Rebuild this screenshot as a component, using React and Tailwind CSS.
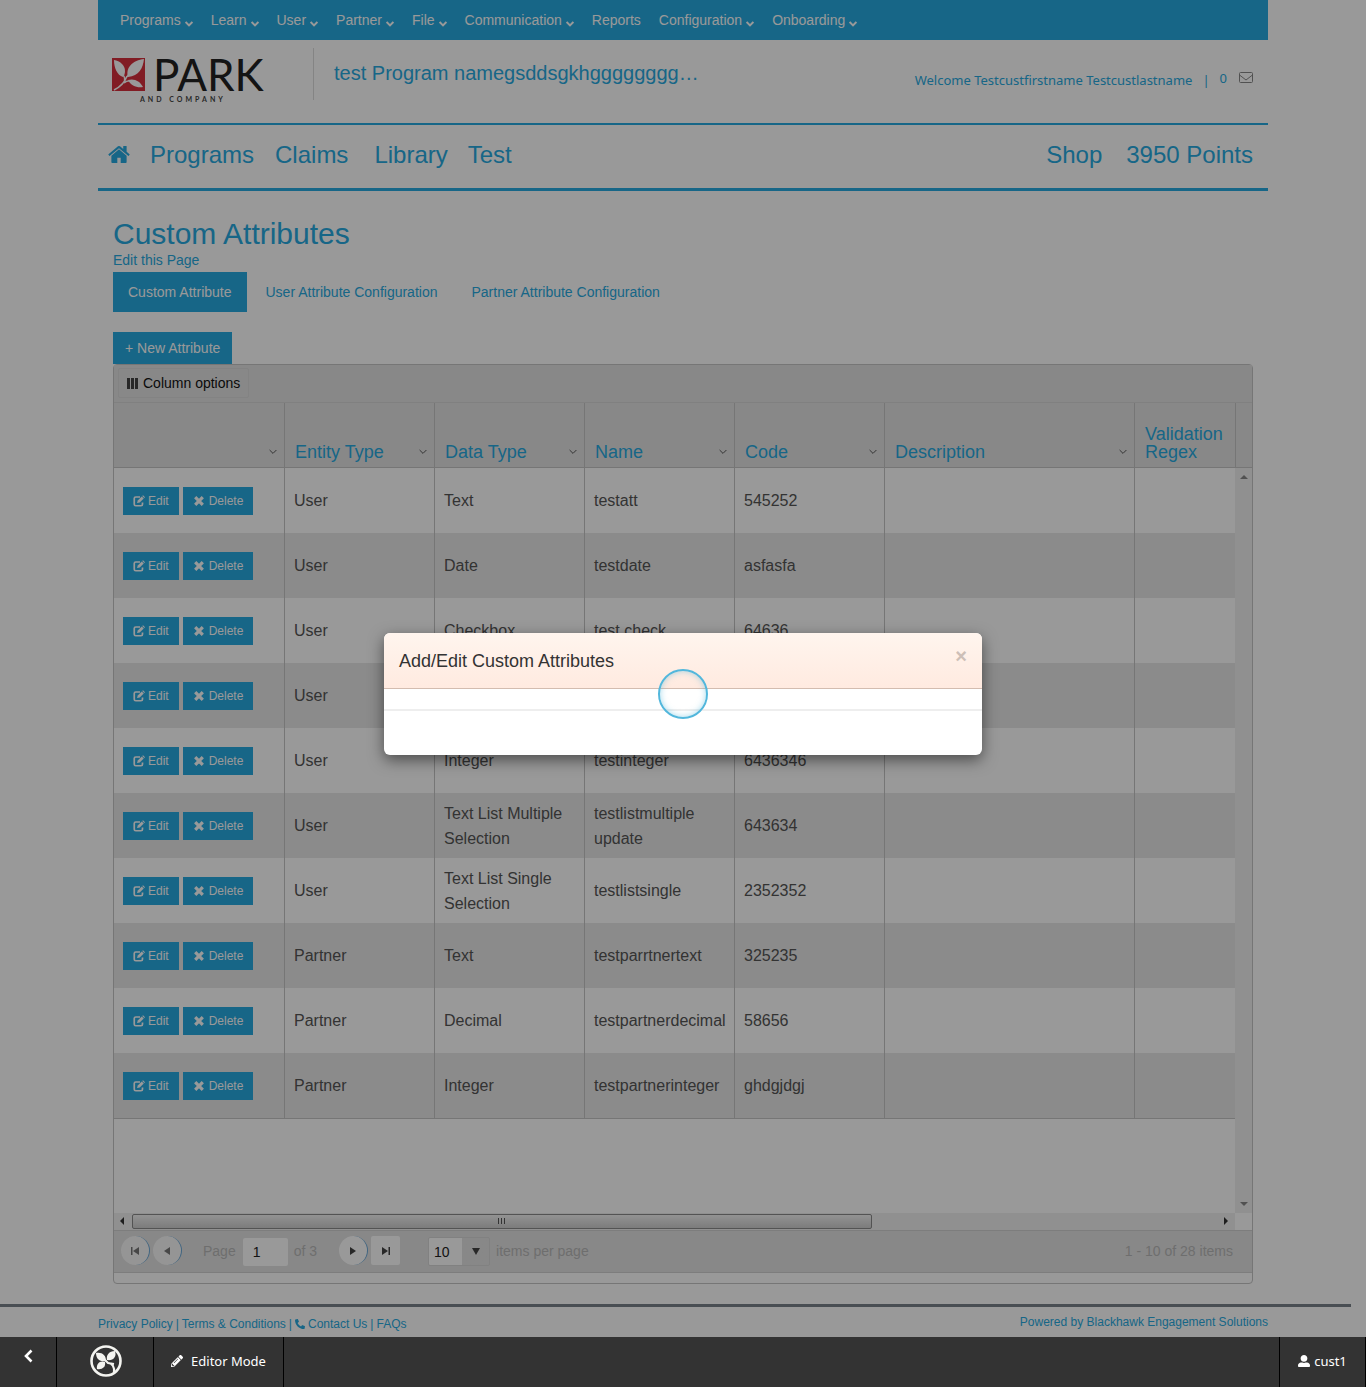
import React from "react";
import { FaPhoneAlt, FaPencilAlt, FaUserAlt } from "react-icons/fa";

const menu = [
  ["Programs", true],
  ["Learn", true],
  ["User", true],
  ["Partner", true],
  ["File", true],
  ["Communication", true],
  ["Reports", false],
  ["Configuration", true],
  ["Onboarding", true],
];

const columns = ["", "Entity Type", "Data Type", "Name", "Code", "Description", "Validation Regex"];

const rows = [
  ["User", "Text", "testatt", "545252"],
  ["User", "Date", "testdate", "asfasfa"],
  ["User", "Checkbox", "test check", "64636"],
  ["User", "", "", ""],
  ["User", "Integer", "testinteger", "6436346"],
  ["User", "Text List Multiple Selection", "testlistmultiple update", "643634"],
  ["User", "Text List Single Selection", "testlistsingle", "2352352"],
  ["Partner", "Text", "testparrtnertext", "325235"],
  ["Partner", "Decimal", "testpartnerdecimal", "58656"],
  ["Partner", "Integer", "testpartnerinteger", "ghdgjdgj"],
];

function Caret({ className }) {
  return (
    <svg viewBox="0 0 8 6" className={className} fill="none" stroke="currentColor" aria-hidden="true">
      <path d="M0.6 1L4 4.4L7.4 1" />
    </svg>
  );
}

function HomeIcon() {
  return (
    <svg viewBox="0 200 1664 1400" className="h-[19px] w-[22px]" fill="currentColor" aria-hidden="true">
      <path d="M1408 992v480q0 26-19 45t-45 19H960v-384H704v384H320q-26 0-45-19t-19-45V992q0-1 .5-3t.5-3l575-474 575 474q1 2 1 6zm223-69l-62 74q-8 9-21 11h-3q-13 0-21-7L832 424 140 1001q-12 8-24 7-13-2-21-11l-62-74q-8-10-7-23.500T37 878L756 279q32-26 76-26t76 26l244 204V288q0-14 9-23t23-9h192q14 0 23 9t9 23v408l219 182q10 8 11 21.500t-7 23.500z" />
    </svg>
  );
}

function EditIcon() {
  return (
    <svg viewBox="0 0 24 24" className="size-3" fill="none" aria-hidden="true">
      <path d="M14 4H5.500Q2.500 4 2.500 7V18.500Q2.500 21.500 5.500 21.500H16Q19 21.500 19 18.500V15" stroke="currentColor" strokeWidth="3.400" />
      <path d="M8 16L9.500 11L17.500 3L21.500 7L13.500 15Z" fill="currentColor" />
      <path d="M18.500 2L20 .5L24 4.500L22.500 6Z" fill="currentColor" />
    </svg>
  );
}

function RemoveIcon() {
  return (
    <svg viewBox="0 0 12 12" className="size-3" stroke="currentColor" strokeWidth="3.200" aria-hidden="true">
      <path d="M2.200 2.200L9.800 9.800M9.800 2.200L2.200 9.800" />
    </svg>
  );
}

function EnvelopeIcon() {
  return (
    <svg viewBox="0 0 14 12" className="mt-1 ml-3 h-3 w-3.5 text-[#888]" fill="none" stroke="currentColor" aria-hidden="true">
      <rect x=".5" y=".5" width="13" height="10" rx="1" />
      <path d="M.5 3L7 8L13.500 3" />
    </svg>
  );
}

function ParkLogo() {
  return (
    <a href="#home" aria-label="Park and Company" className="mt-[18px] ml-3.5 block w-[152px]">
      <span className="flex items-center gap-2">
        <svg viewBox="0 0 33 33" className="size-[33px] shrink-0" aria-hidden="true">
          <rect width="33" height="33" fill="#d8303c" />
          <g fill="#fff">
            <path d="M2 2C8 3 13 7 13 13C13 16 12 18 11 19C5 17 2 10 2 2Z" />
            <path d="M32 1C31 10 27 18 16 19C13 10 21 2 32 1Z" />
            <path d="M16 22C22 20 28 23 31 29C25 30 19 28 16 22Z" />
          </g>
          <path d="M2 32C8 29 13 24 15 18M11 17C13 19 13 22 12 25M12 25C14 23 16 22 20 23M15 19C17 15 21 11 26 7" fill="none" stroke="#fff" strokeWidth="1.500" />
        </svg>
        <span className="font-[Lato] text-[44px] leading-[33px] text-[#222]">PARK</span>
      </span>
      <span className="mt-1 block pl-7 font-[Lato] text-[7px] leading-[9px] font-bold tracking-[3px] text-[#444]">AND COMPANY</span>
    </a>
  );
}

function PagerButton({ label, square, disabled, children }) {
  return (
    <button
      type="button"
      aria-label={label}
      disabled={disabled}
      className={
        "flex size-[29px] items-center justify-center " +
        (disabled ? "bg-[#f8f8f8] text-[#777] " : "bg-white text-[#444] ") +
        (square ? "rounded-xs" : "rounded-full border-r border-[#6aa7d6]")
      }
    >
      <svg viewBox="0 0 10 10" className="size-2.5" fill="currentColor" aria-hidden="true">
        {children}
      </svg>
    </button>
  );
}

export default function App() {
  return (
    <div className="relative flex min-h-screen flex-col bg-white font-['Liberation_Sans',Arial,sans-serif] text-sm text-[#27aae1]">
      <header className="mx-auto w-full max-w-[1170px]">
        <nav className="flex h-10 items-center gap-[18px] bg-[#27aae1] px-[22px] text-white" aria-label="Administration">
          {menu.map(([name, more]) => (
            <a key={name} href="#menu" className="flex items-center gap-1 leading-5">
              {name}
              {more && <Caret className="mt-2 h-1.5 w-2 stroke-2" />}
            </a>
          ))}
        </nav>
        <div className="flex h-[83px] items-start">
          <div className="w-[215px] shrink-0">
            <ParkLogo />
          </div>
          <div className="mt-2 h-[52px] border-l border-[#ddd] pl-5">
            <p className="pt-[13px] text-xl leading-6">test Program namegsddsgkhgggggggg…</p>
          </div>
          <div className="mt-7 mr-[15px] ml-auto flex items-start font-['Noto_Sans',sans-serif] text-[13px] leading-5">
            <span className="mt-0.5">Welcome Testcustfirstname Testcustlastname</span>
            <span className="mt-0.5 ml-2.5">|</span>
            <span className="ml-2.5">0</span>
            <EnvelopeIcon />
          </div>
        </div>
        <nav className="flex h-[68px] items-center border-t-2 border-b-3 border-[#27aae1] pr-[15px] pb-1 pl-2.5 text-2xl" aria-label="Main">
          <a href="#home" aria-label="Home"><HomeIcon /></a>
          <a href="#programs" className="ml-5">Programs</a>
          <a href="#claims" className="ml-[21px]">Claims</a>
          <a href="#library" className="ml-[26px]">Library</a>
          <a href="#test" className="ml-5">Test</a>
          <a href="#shop" className="ml-auto">Shop</a>
          <a href="#points" className="ml-6">3950 Points</a>
        </nav>
      </header>

      <main className="mx-auto w-full max-w-[1170px] px-[15px] pt-[26px]">
        <h1 className="text-3xl leading-[33px]">Custom Attributes</h1>
        <a href="#edit" className="block leading-5">Edit this Page</a>
        <nav className="mt-0.5 flex gap-1" aria-label="Attribute sections">
          <a href="#custom" className="bg-[#27aae1] px-[15px] py-2.5 leading-5 text-white">Custom Attribute</a>
          <a href="#user" className="px-[15px] py-2.5 leading-5">User Attribute Configuration</a>
          <a href="#partner" className="px-[15px] py-2.5 leading-5">Partner Attribute Configuration</a>
        </nav>
        <button type="button" className="mt-5 block bg-[#27aae1] px-3 py-1.5 leading-5 text-white">+ New Attribute</button>

        <section className="rounded-sm border border-[#c5c5c5] pb-2.5">
          <div className="flex h-[38px] items-center border-b border-[#d5d5d5] bg-[#e3e3e3] pb-px pl-1">
            <button type="button" className="flex items-center gap-[5px] rounded-xs border border-[#dadada] px-2 py-1 leading-5 text-[#111]">
              <svg viewBox="0 0 11 11" className="size-[11px]" fill="#444" aria-hidden="true">
                <path d="M0 0h3v11H0zM4 0h3v11H4zM8 0h3v11H8z" />
              </svg>
              Column options
            </button>
          </div>
          <div className="flex">
            <div className="min-w-0 flex-1 overflow-hidden">
              <table className="w-full table-fixed border-separate border-spacing-0">
                <colgroup>
                  <col className="w-[170px]" />
                  <col className="w-[150px]" />
                  <col className="w-[150px]" />
                  <col className="w-[150px]" />
                  <col className="w-[150px]" />
                  <col className="w-[250px]" />
                  <col />
                </colgroup>
                <thead>
                  <tr>
                    {columns.map((c, i) => (
                      <th key={i} className="h-[65px] border-b border-l border-[#c5c5c5] bg-[#e3e3e3] pr-[7px] pb-1.5 pl-2.5 text-left align-bottom text-lg leading-[18px] font-normal first:border-l-0">
                        <span className="flex items-end justify-between">
                          <span>{c}</span>
                          {i < 6 && <Caret className="mb-1.5 h-1.5 w-2 shrink-0 text-[#555]" />}
                        </span>
                      </th>
                    ))}
                  </tr>
                </thead>
                <tbody className="text-base leading-[25px] text-[#555]">
                  {rows.map((r, i) => (
                    <tr key={i} className="even:bg-[#e8e8e8]">
                      <td className="h-[65px] pl-[9px]">
                        <span className="flex gap-1 text-xs leading-4 text-white">
                          <button type="button" className="flex items-center gap-[3px] bg-[#27aae1] px-2.5 py-1.5">
                            <EditIcon />
                            Edit
                          </button>
                          <button type="button" className="flex items-center gap-1 bg-[#27aae1] px-2.5 py-1.5">
                            <RemoveIcon />
                            Delete
                          </button>
                        </span>
                      </td>
                      {[...r, "", ""].map((v, j) => (
                        <td key={j} className="border-l border-[#c5c5c5] px-[9px]">{v}</td>
                      ))}
                    </tr>
                  ))}
                </tbody>
              </table>
              <div className="h-[95px] border-t border-[#c5c5c5]" />
            </div>
            <div className="flex w-[17px] shrink-0 flex-col">
              <div className="h-[65px] border-b border-l border-[#c5c5c5] bg-[#e3e3e3]" />
              <div className="flex flex-1 flex-col items-center justify-between bg-[#f0f0f0] py-1.5 text-[#888]">
                <svg viewBox="0 0 8 5" className="h-[5px] w-2" fill="currentColor" aria-hidden="true"><path d="M0 5L4 1L8 5Z" /></svg>
                <svg viewBox="0 0 8 5" className="h-[5px] w-2" fill="currentColor" aria-hidden="true"><path d="M0 0L4 4L8 0Z" /></svg>
              </div>
            </div>
          </div>
          <div className="mr-[17px] flex h-[17px] items-center bg-[#f0f0f0] pb-px text-[#333]">
            <svg viewBox="0 0 5 8" className="mr-2 ml-[5px] h-2 w-[5px]" fill="currentColor" aria-hidden="true"><path d="M5 0L1 4L5 8Z" /></svg>
            <div className="flex h-[15px] w-[66%] items-center justify-center rounded-xs border border-[#8a8a8a] bg-linear-to-b from-[#f4f4f4] to-[#cfcfcf]">
              <svg viewBox="0 0 8 6" className="h-1.5 w-2" stroke="#555" aria-hidden="true"><path d="M.5 0V6M3.500 0V6M6.500 0V6" /></svg>
            </div>
            <svg viewBox="0 0 5 8" className="mr-1.5 ml-auto h-2 w-[5px]" fill="currentColor" aria-hidden="true"><path d="M0 0L4 4L0 8Z" /></svg>
          </div>
          <div className="flex h-[43px] items-center border-y border-[#d0d0d0] bg-[#e3e3e3] pr-[19px] pb-0.5 pl-[7px] text-[#b8b8b8]">
            <PagerButton label="First page" disabled><path d="M1 1H2.500V9H1zM9 1V9L3 5Z" /></PagerButton>
            <span className="w-[3px]" />
            <PagerButton label="Previous page" disabled><path d="M8 1V9L2 5Z" /></PagerButton>
            <label className="ml-[21px] flex items-center gap-[7px]">
              Page
              <input defaultValue="1" className="mt-0.5 h-7 w-[45px] rounded-xs bg-white px-2.5 text-[#222]" />
            </label>
            <span className="ml-1.5">of 3</span>
            <span className="w-[22px]" />
            <PagerButton label="Next page"><path d="M2 1V9L8 5Z" /></PagerButton>
            <span className="w-[3px]" />
            <PagerButton label="Last page" square><path d="M1 1V9L7 5ZM7.500 1H9V9H7.500z" /></PagerButton>
            <label className="ml-7 flex items-center gap-1.5">
              <span className="relative mt-0.5 flex">
                <select defaultValue="10" className="h-[29px] w-[62px] appearance-none rounded-xs border border-[#d8d8d8] bg-linear-to-r from-white from-55% to-[#e3e3e3] to-55% pl-[5px] text-[#222]">
                  <option>10</option>
                  <option>20</option>
                </select>
                <svg viewBox="0 0 8 7" className="pointer-events-none absolute top-[11px] right-2.5 h-[7px] w-2" fill="#444" aria-hidden="true"><path d="M0 0H8L4 7Z" /></svg>
              </span>
              items per page
            </label>
            <span className="ml-auto">1 - 10 of 28 items</span>
          </div>
        </section>
      </main>

      <footer className="mt-5 text-xs">
        <div className="mr-[15px] h-[3px] bg-[#7b838b]" />
        <div className="mx-auto flex h-[30px] w-full max-w-[1170px] items-start justify-between pt-1.5 leading-[18px]">
          <div className="flex items-center gap-[3px] pt-0.5">
            <a href="#privacy">Privacy Policy</a>|<a href="#terms">Terms &amp; Conditions</a>|
            <a href="#contact" className="flex items-center gap-[3px]"><FaPhoneAlt className="size-2.5" />Contact Us</a>|
            <a href="#faqs">FAQs</a>
          </div>
          <span>Powered by Blackhawk Engagement Solutions</span>
        </div>
      </footer>

      <div className="fixed inset-0 bg-black/40" />

      <div className="relative flex h-[50px] bg-[#333] font-['Noto_Sans',sans-serif] text-[13px] text-white">
        <button type="button" aria-label="Back" className="flex w-[57px] items-center justify-center border-r border-black pb-3">
          <svg viewBox="0 0 10 14" className="h-3.5 w-2.5" fill="none" stroke="currentColor" strokeWidth="2.600" aria-hidden="true"><path d="M8.500 1.500L3 7L8.500 12.500" /></svg>
        </button>
        <a href="#brand" aria-label="Brand" className="flex w-[97px] items-center justify-center border-r border-black pb-0.5 pl-0.5">
          <svg viewBox="0 0 32 32" className="size-8" aria-hidden="true">
            <circle cx="16" cy="16" r="14.500" fill="none" stroke="#f4f4f0" strokeWidth="2.600" />
            <g fill="#f4f4f0">
              <path d="M16 16C11 17 6 15 6 8C12 7 16 10 16 16Z" />
              <path d="M17 15C16 10 19 6 25 6C27 12 23 16 17 15Z" />
              <path d="M15 17C16 22 12 25 7 24C6 19 10 15 15 17Z" />
            </g>
            <path d="M15 15L18 18C22 18 25 22 24 28M18 18L24 19" fill="none" stroke="#f4f4f0" strokeWidth="2.200" />
          </svg>
        </a>
        <button type="button" className="flex w-[130px] items-center justify-center gap-2 border-r border-black pb-0.5">
          <FaPencilAlt className="size-3" />
          Editor Mode
        </button>
        <button type="button" className="ml-auto flex w-[87px] items-center justify-center gap-1 border-x border-black pb-0.5">
          <FaUserAlt className="size-3" />
          cust1
        </button>
      </div>

      <div className="fixed inset-0 flex items-center justify-center">
        <div role="dialog" aria-labelledby="dialog-title" className="relative w-[598px] overflow-hidden rounded-md bg-white shadow-[0_5px_15px_rgba(0,0,0,0.5)]">
          <div className="flex items-start justify-between border-b border-[#d3bcb0] bg-linear-to-b from-[#fff5ee] to-[#ffeae0] px-[15px] pt-4 pb-[15px]">
            <h2 id="dialog-title" className="text-lg leading-6 text-[#333]">Add/Edit Custom Attributes</h2>
            <button type="button" aria-label="Close" className="text-xl leading-[14px] font-bold text-[#cdbfb7]">×</button>
          </div>
          <div className="h-[22px] border-b-2 border-[#eee]" />
          <div className="h-11" />
        </div>
        <div role="status" aria-label="Loading" className="absolute size-[50px] rounded-full border-2 border-[#52b7dc] shadow-[inset_0_0_6px_rgba(82,183,220,0.5)]" />
      </div>
    </div>
  );
}
